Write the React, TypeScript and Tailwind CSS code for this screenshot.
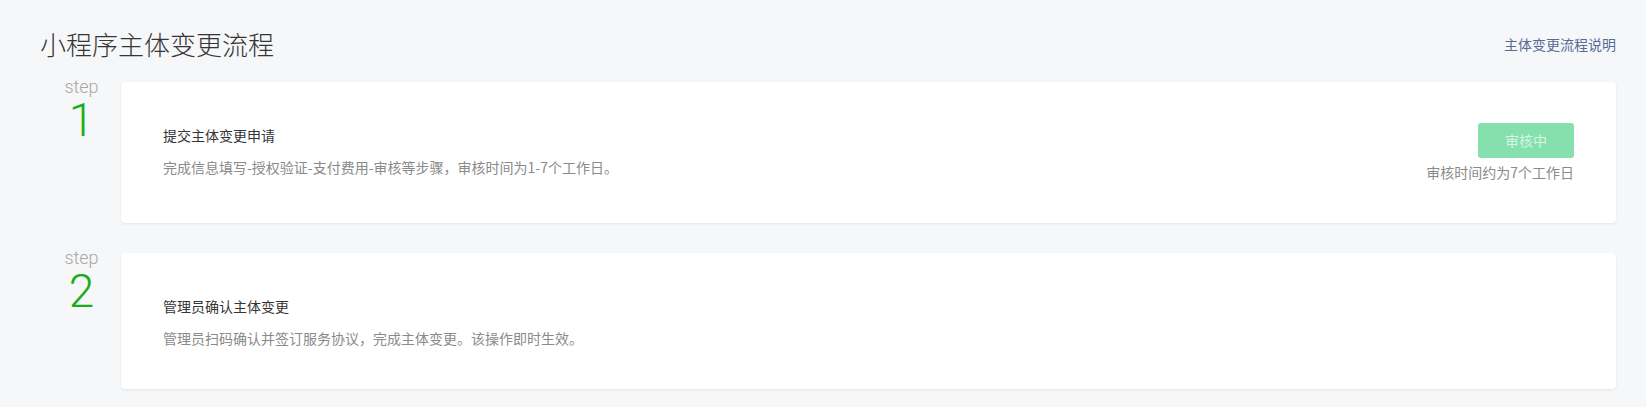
import React from 'react';

const steps = [
  {
    no: 1,
    title: '提交主体变更申请',
    desc: '完成信息填写-授权验证-支付费用-审核等步骤，审核时间为1-7个工作日。',
    status: '审核中',
    note: '审核时间约为7个工作日',
    height: 'h-[141px]',
  },
  {
    no: 2,
    title: '管理员确认主体变更',
    desc: '管理员扫码确认并签订服务协议，完成主体变更。该操作即时生效。',
    height: 'h-[136px]',
  },
];

const cjk = "font-['Noto_Sans_CJK_SC','Noto_Sans',sans-serif]";

const App = () => {
  return (
    <div className={`min-h-[407px] w-full bg-[#f6f7f9] px-[30px] pt-[26px] ${cjk}`}>
      <div className="flex h-[36px] items-center justify-between">
        <h1 className="ml-[10px] text-[26px] font-light leading-[36px] text-[#353535]">小程序主体变更流程</h1>
        <a href="#" className="text-[14px] leading-[20px] text-[#576b95]">
          主体变更流程说明
        </a>
      </div>

      <div className="mt-[20px] flex flex-col gap-[30px]">
        {steps.map((s) => (
          <div key={s.no} className="flex">
            <div className="-mt-[4px] flex w-[91px] shrink-0 flex-col items-center pl-[12px] font-['Roboto','Open_Sans',sans-serif] font-light">
              <span className="text-[18px] leading-[18px] text-[#a8a8a8]">step</span>
              <span className="mt-[5px] text-[46px] leading-[38px] text-[#1aad19]">{s.no}</span>
            </div>
            <div
              className={`flex flex-1 items-center justify-between rounded-[4px] bg-white px-[42px] shadow-[0_1px_3px_rgba(0,0,0,0.08)] ${s.height}`}
            >
              <div className={s.status ? '-mt-[4px]' : 'mt-[1px]'}>
                <div className="text-[14px] leading-[20px] text-[#353535]">{s.title}</div>
                <div className="mt-[12px] text-[14px] leading-[20px] text-[#8a8a8a]">{s.desc}</div>
              </div>
              {s.status && (
                <div className="flex flex-col items-end">
                  <button
                    disabled
                    className="h-[35px] w-[96px] rounded-[3px] bg-[#85e0ae] text-[14px] text-[#d6f5e4]"
                  >
                    {s.status}
                  </button>
                  <div className="mt-[4px] text-[14px] leading-[20px] text-[#8a8a8a]">{s.note}</div>
                </div>
              )}
            </div>
          </div>
        ))}
      </div>
    </div>
  );
};

export default App;
